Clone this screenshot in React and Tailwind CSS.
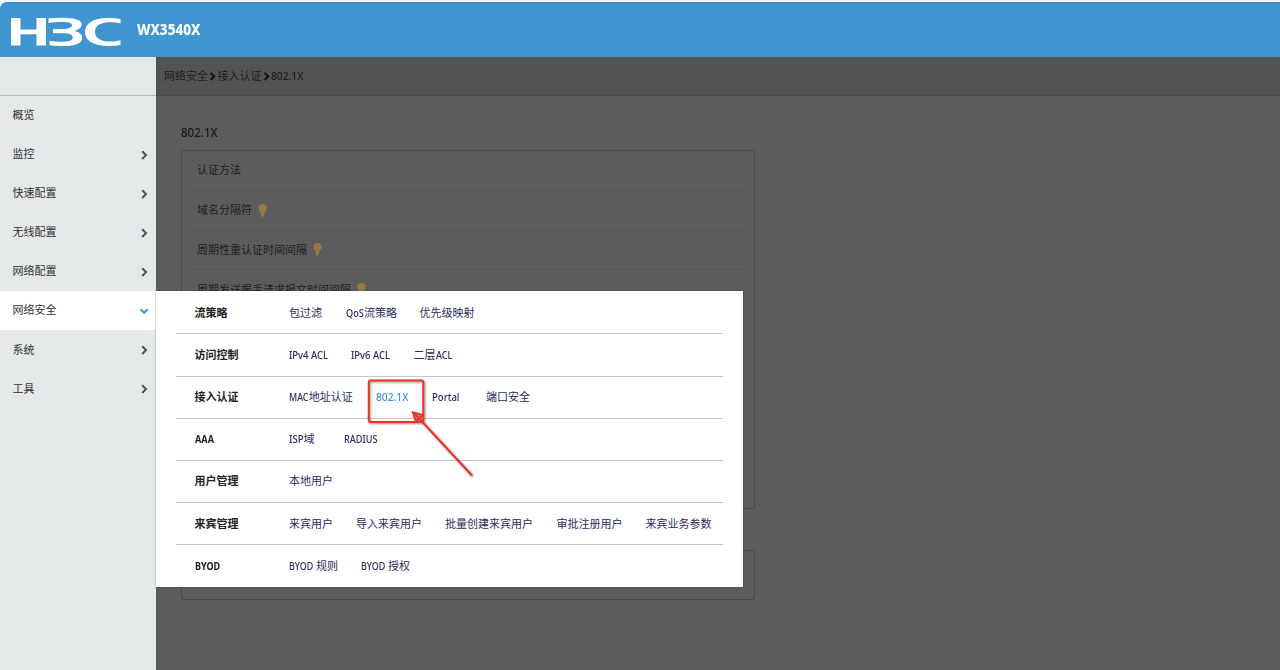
const CJK = "font-['Noto_Sans','Noto_Sans_CJK_SC',sans-serif]";

// Latin run set narrower than its natural width; w is the space it takes in the line.
function Narrow({ w, s, weight = "font-medium", children }) {
  return (
    <span className={`inline-block whitespace-pre ${weight} ${w}`}>
      <span className={`inline-block origin-left ${s}`}>{children}</span>
    </span>
  );
}

function Chevron({ down = false }) {
  return (
    <svg width="10" height="10" viewBox="0 0 10 10" fill="none" strokeWidth="2" className={down ? "stroke-[#3f98d5]" : "stroke-[#505060]"}>
      <path d={down ? "M1.5 3.2 L5.2 6.800 L8.9 3.2" : "M3.2 1.2 L7 5.1 L3.2 9"} />
    </svg>
  );
}

function Crumb() {
  return (
    <svg width="9.500" height="9" viewBox="0 0 9.500 9" fill="none" strokeWidth="2.2" className="stroke-[#14141c]">
      <path d="M2.5 0.8 L6.2 4.4 L2.5 8" />
    </svg>
  );
}

function Bulb() {
  return (
    <svg width="9" height="13" viewBox="0 0 9 13" className="ml-[6px] fill-[#967a40]">
      <path d="M4.5 0 C7 0 8.7 1.7 8.7 4 C8.7 6.2 6.6 7.2 6.3 9.3 L6.1 11.5 L5.3 12.8 H3.7 L2.9 11.5 L2.7 9.3 C2.4 7.2 .3 6.2 .3 4 C.3 1.7 2 0 4.5 0 Z" />
    </svg>
  );
}

const nav = ["概览", "监控", "快速配置", "无线配置", "网络配置", "网络安全", "系统", "工具"];

const groups = [
  { title: "流策略", links: [
    { w: "w-[56.5px]", t: "包过滤" },
    { w: "w-[74px]", t: <><Narrow w="w-[18.5px]" s="scale-x-[.83]">QoS</Narrow>流策略</> },
    { w: "", t: "优先级映射" } ] },
  { title: "访问控制", links: [
    { w: "w-[62px]", t: <Narrow w="w-[39px]" s="scale-x-[.86]">IPv4 ACL</Narrow> },
    { w: "w-[62.5px]", t: <Narrow w="w-[39px]" s="scale-x-[.86]">IPv6 ACL</Narrow> },
    { w: "", t: <>二层<Narrow w="w-[17px]" s="scale-x-[.83]">ACL</Narrow></> } ] },
  { title: "接入认证", links: [
    { w: "w-[86.5px]", t: <><Narrow w="w-[19.700px]" s="scale-x-[.81]">MAC</Narrow>地址认证</> },
    { w: "w-[56px]", c: "text-[#3d95cf]", t: <Narrow w="w-[33px]" s="scale-x-[.93]">802.1X</Narrow> },
    { w: "w-[54.5px]", t: <Narrow w="w-[28px]" s="scale-x-[.87]">Portal</Narrow> },
    { w: "", t: "端口安全" } ] },
  { title: <Narrow weight="font-bold" w="w-[20px]" s="scale-x-[.83]">AAA</Narrow>, links: [
    { w: "w-[55px]", t: <><Narrow w="w-[14.5px]" s="scale-x-[.88]">ISP</Narrow>域</> },
    { w: "", t: <Narrow w="w-[34px]" s="scale-x-[.83]">RADIUS</Narrow> } ] },
  { title: "用户管理", links: [{ w: "", t: "本地用户" }] },
  { title: "来宾管理", links: [
    { w: "w-[67px]", t: "来宾用户" },
    { w: "w-[89px]", t: "导入来宾用户" },
    { w: "w-[111.5px]", t: "批量创建来宾用户" },
    { w: "w-[89px]", t: "审批注册用户" },
    { w: "", t: "来宾业务参数" } ] },
  { title: <Narrow weight="font-bold" w="w-[26px]" s="scale-x-[.82]">BYOD</Narrow>, links: [
    { w: "w-[72px]", t: <><Narrow w="w-[27px]" s="scale-x-[.81]">BYOD</Narrow>规则</> },
    { w: "", t: <><Narrow w="w-[27px]" s="scale-x-[.81]">BYOD</Narrow>授权</> } ] },
];

const fields = [
  { t: "认证方法" },
  { t: "域名分隔符", tip: true },
  { t: "周期性重认证时间间隔", tip: true },
  { t: "周期发送握手请求报文时间间隔", tip: true },
  {}, {}, {}, {}, {},
];

function Logo() {
  return (
    <svg width="112" height="30" viewBox="0 0 112 30" className="mt-[3px] fill-white">
      <path d="M1 1 H10.500 V12.400 H26.500 V1 H36 V28.500 H26.500 V17.200 H10.500 V28.500 H1 Z" />
      <path d="M38.5 1.3 C47 .7 57 .5 64 1.8 C70 3 72.500 5.500 71.500 8.500 C71 11 68.500 13 64.500 14 C69.500 15 72.500 17.500 72.200 21.500 C71.500 27.500 63 29 53 29 C47 29 42 28.700 39.500 28.200 V23.700 C46 24.600 52 25 56.500 24.500 C60.500 24 62.800 22.800 62.800 20.500 C62.800 17.500 59 16.300 53 16.300 H43 V12 H52 C58.500 12 62 10.700 62 8.200 C62 5.800 58.500 5 53 5 C47.500 5 42.500 5.400 38.500 6 Z" />
      <path d="M110.500 2 V6.500 C106.500 5.500 102 5 98.500 5.200 C89.500 5.700 85 9 85 14.800 C85 20.600 89.500 24 98 24.500 C102 24.700 106.500 24.200 110.500 23.300 V28 C105.500 28.900 100 29.200 95 28.900 C81.500 28 75 22.500 75 15 C75 7.500 81.500 1.700 95 1 C100 .7 106 1 110.500 2 Z" />
    </svg>
  );
}

export default function App() {
  return (
    <div className={`relative flex h-[670px] w-[1280px] flex-col overflow-hidden bg-[#f4f6f7] pt-[2px] text-[11px] leading-4 ${CJK}`}>
      <header className="flex h-[55px] shrink-0 items-center rounded-tl-[7px] border-t border-[#368cc8] bg-[#3f95d0] pl-[10px] text-white">
        <Logo />
        <span className="mb-[2px] ml-[15px] text-[15px]"><Narrow weight="font-extrabold" w="w-[64px]" s="scale-x-[.9]">WX3540X</Narrow></span>
      </header>
      <div className="flex min-h-0 flex-1">
        <aside className="w-[156px] shrink-0 bg-[#e4e8e9] text-[#333]">
          <div className="h-[39px] border-b border-[#b5b9ba]" />
          {nav.map((n, i) => (
            <div key={n} className={`flex h-[39.080px] items-center justify-between pl-[12.500px] pr-[7px] ${i === 5 ? "bg-white" : ""}`}>
              <span className="-mt-[1px]">{n}</span>
              {i > 0 && <Chevron down={i === 5} />}
            </div>
          ))}
        </aside>
        <main className="flex-1 overflow-hidden bg-[#5c5c5c] text-[#1d1d28]">
          <div className="flex h-[39px] items-center border-b border-[#4a4a4a] bg-[#535353] pl-2">
            <span>网络安全</span><Crumb /><span>接入认证</span><Crumb />
            <Narrow w="w-[33px]" s="scale-x-[.93]">802.1X</Narrow>
          </div>
          <div className="pl-[24.500px] pt-[29px]">
            <div className="text-[12px] text-[#17171d]"><Narrow w="w-[37px]" s="scale-x-[.96]">802.1X</Narrow></div>
            <div className="mt-[9px] h-[359px] w-[574px] rounded-[2px] border border-[#494949] px-[7px]">
              {fields.map((f, i) => (
                <div key={i} className={`flex h-[39.800px] items-center pl-[8.500px] ${i < 8 ? "border-b border-[#565656]" : ""}`}>
                  {f.t}{f.tip && <Bulb />}
                </div>
              ))}
            </div>
            <div className="mt-[41px] h-[50px] w-[574px] rounded-[2px] border border-[#494949]" />
          </div>
        </main>
      </div>
      <section className="absolute left-[156px] top-[291px] h-[296px] w-[587px] bg-white pl-5 pr-5 pt-[1.200px] shadow-[0_0_1px_#333]">
        {groups.map((g, i) => (
          <div key={i} className={`flex h-[42.170px] items-center pl-[18.500px] ${i < 6 ? "border-b border-[#c4c6c7]" : ""}`}>
            <span className="w-[94.500px] font-bold text-[#222]">{g.title}</span>
            {g.links.map((l, j) => (
              <a key={j} className={`whitespace-nowrap ${l.w} ${l.c || "text-[#2c2c5c]"}`}>{l.t}</a>
            ))}
          </div>
        ))}
      </section>
      <svg width="120" height="110" viewBox="360 370 120 110" fill="none" className="absolute left-[360px] top-[370px] stroke-[#ee3322] drop-shadow-[1px_1px_1px_rgba(0,0,0,0.45)]" strokeWidth="2">
        <rect x="368.800" y="380.500" width="54.500" height="41.500" rx="2" />
        <path d="M472 475.500 L415 414" />
        <path d="M413 412.500 L422.500 415 L416 421.500 Z" />
      </svg>
    </div>
  );
}
